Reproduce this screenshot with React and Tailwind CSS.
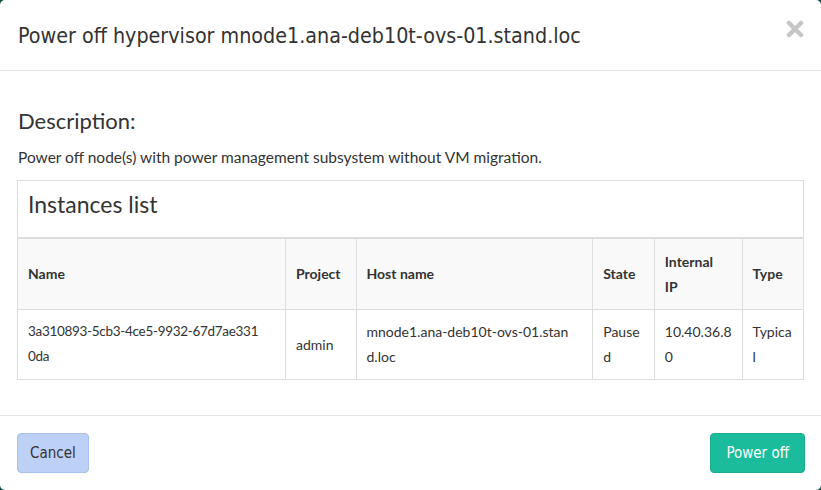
import React from 'react';

const rows = [
    {
        name: ['3a310893-5cb3-4ce5-9932-67d7ae331', '0da'],
        project: ['admin'],
        host: ['mnode1.ana-deb10t-ovs-01.stan', 'd.loc'],
        state: ['Pause', 'd'],
        ip: ['10.40.36.8', '0'],
        type: ['Typica', 'l'],
    },
];

const cols = [
    { key: 'name', label: ['Name'], w: 'w-[269px]', cell: 'text-[13.5px] tracking-[-0.3px]' },
    { key: 'project', label: ['Project'], w: 'w-[71px]', cell: '' },
    { key: 'host', label: ['Host name'], w: 'w-[238px]', cell: '' },
    { key: 'state', label: ['State'], w: 'w-[62px]', cell: '' },
    { key: 'ip', label: ['Internal', 'IP'], w: 'w-[86px]', cell: '' },
    { key: 'type', label: ['Type'], w: 'w-[61px]', cell: '' },
];

const condensed = { fontFamily: '"Liberation Sans Narrow", "DejaVu Sans Condensed", sans-serif' };

const Lines = ({ lines }) => (
    <>
        {lines.map((l, i) => (
            <div key={i} className="whitespace-nowrap">{l}</div>
        ))}
    </>
);

const App = () => {
    return (
        <div className="w-[821px] h-[490px] bg-[#0f4d44] overflow-hidden">
            <div
                className="w-full h-full bg-white rounded-[5px] flex flex-col text-[#333]"
                style={{ fontFamily: 'Lato, "Open Sans", sans-serif' }}
            >
                {/* header */}
                <div className="h-[71px] border-b border-[#e5e5e5] flex items-center justify-between pl-[18px] pr-[17px]">
                    <h4 className="text-[21.3px] text-[#333] pt-[1px]" style={condensed}>
                        Power off hypervisor mnode1.ana-deb10t-ovs-01.stand.loc
                    </h4>
                    <svg width="18" height="18" viewBox="0 0 18 18" className="mb-[13px]">
                        <path d="M3 3 L15 15 M15 3 L3 15" stroke="#c6c6c6" strokeWidth="4.5" strokeLinecap="round" />
                    </svg>
                </div>

                {/* body */}
                <div className="px-[17px] pt-[36px] h-[344px]">
                    <h3 className="text-[22px] leading-[28px] text-[#333] pl-[1px]">Description:</h3>
                    <p className="text-[15.5px] leading-[20px] mt-[12px] pl-[1px]">
                        Power off node(s) with power management subsystem without VM migration.
                    </p>
                    <div className="mt-[13px] border border-[#ddd]">
                        <div className="h-[58px] border-b-2 border-[#ddd] flex items-center px-[10px]">
                            <span className="text-[23px] text-[#333] pb-[10px]">Instances list</span>
                        </div>
                        <table className="border-collapse text-[14px] leading-[25px] table-fixed">
                            <thead>
                                <tr className="bg-[#f9f9f9] h-[70px]">
                                    {cols.map((c, i) => (
                                        <th
                                            key={c.key}
                                            className={`${c.w} text-left font-bold align-middle px-[10px] ${i > 0 ? 'border-l border-[#ddd]' : ''}`}
                                        >
                                            <Lines lines={c.label} />
                                        </th>
                                    ))}
                                </tr>
                            </thead>
                            <tbody>
                                {rows.map((r, ri) => (
                                    <tr key={ri} className="h-[70px] border-t border-[#ddd]">
                                        {cols.map((c, i) => (
                                            <td
                                                key={c.key}
                                                className={`${c.w} ${c.cell} align-middle px-[10px] ${i > 0 ? 'border-l border-[#ddd]' : ''}`}
                                            >
                                                <Lines lines={r[c.key]} />
                                            </td>
                                        ))}
                                    </tr>
                                ))}
                            </tbody>
                        </table>
                    </div>
                </div>

                {/* footer */}
                <div className="border-t border-[#e5e5e5] flex items-start justify-between pl-[17px] pr-[16px] pt-[17px] flex-1">
                    <button
                        className="h-[40px] px-[12px] rounded-[4px] bg-[#bdd0f5] border border-[#a9c0ec] text-[#333] text-[15px]"
                        style={condensed}
                    >
                        Cancel
                    </button>
                    <button
                        className="h-[40px] px-[15px] rounded-[4px] bg-[#1abc9c] border border-[#18ad90] text-white text-[15px]"
                        style={condensed}
                    >
                        Power off
                    </button>
                </div>
            </div>
        </div>
    );
};

export default App;
